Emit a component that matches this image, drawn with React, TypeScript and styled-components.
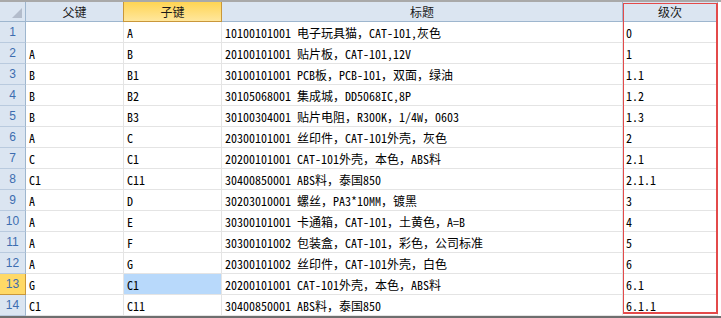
import React from "react";
import styled, { createGlobalStyle, css } from "styled-components";

const GlobalStyle = createGlobalStyle`
  html, body {
    margin: 0;
    padding: 0;
    background: #ffffff;
  }
  body {
    font-family: "Noto Sans CJK SC", "Liberation Sans", sans-serif;
  }
`;

const Sheet = styled.div`
  position: relative;
  width: 721px;
  height: 318px;
  overflow: hidden;
  background: #ffffff;
`;

const TopRule = styled.div`
  height: 2px;
  background: #a9a9a9;
`;

const BottomRule = styled.div`
  height: 2px;
  background: #6e6e6e;
`;

const Grid = styled.div`
  display: grid;
  grid-template-columns: 26px 98px 98px 401px 95px;
  grid-template-rows: 20px repeat(14, 21px);
  width: 718px;
`;

const HeaderCell = styled.div<{ $active?: boolean }>`
  position: relative;
  box-sizing: border-box;
  display: flex;
  align-items: center;
  justify-content: center;
  background: #dbe5f1;
  border-right: 1px solid #9eb6ce;
  border-bottom: 1px solid #9eb6ce;
  font-size: 12px;
  color: #1a1a1a;
  ${({ $active }) =>
    $active &&
    css`
      background: linear-gradient(#ffd453, #ffe79d);
      border-right-color: #c9973a;
      border-bottom-color: #c9973a;
      &::before {
        content: "";
        position: absolute;
        left: -1px;
        top: 0;
        bottom: -1px;
        width: 1px;
        background: #c9973a;
      }
    `}
`;

const Corner = styled(HeaderCell)`
  &::after {
    content: "";
    position: absolute;
    right: 3px;
    bottom: 3px;
    width: 0;
    height: 0;
    border-left: 10px solid transparent;
    border-bottom: 10px solid #b3bccb;
  }
`;

const RowNum = styled.div<{ $active?: boolean }>`
  box-sizing: border-box;
  display: flex;
  align-items: center;
  justify-content: center;
  background: #dbe5f1;
  border-right: 1px solid #9eb6ce;
  border-bottom: 1px solid #b9cade;
  font-family: "Liberation Sans", sans-serif;
  font-size: 12px;
  color: #3d6db0;
  ${({ $active }) =>
    $active &&
    css`
      background: #ffd966;
      border-right-color: #c9973a;
      border-bottom-color: #c9973a;
    `}
`;

const Cell = styled.div<{ $selected?: boolean }>`
  box-sizing: border-box;
  display: flex;
  align-items: center;
  padding: 0 3px;
  border-right: 1px solid #e4e4e4;
  border-bottom: 1px solid #e4e4e4;
  font-family: "Noto Sans Mono CJK SC", "Noto Sans CJK SC", monospace;
  font-size: 12px;
  color: #000000;
  white-space: pre;
  overflow: hidden;
  background: ${({ $selected }) => ($selected ? "#b8d9fb" : "#ffffff")};
`;

const Annotation = styled.div`
  position: absolute;
  left: 623px;
  top: 3px;
  width: 95px;
  height: 311px;
  box-sizing: border-box;
  border-style: solid;
  border-color: #e34a4a;
  border-width: 1px 2px 2px 1px;
  pointer-events: none;
`;

type Row = [string, string, string, string];

const rows: Row[] = [
  ["", "A", "10100101001 电子玩具猫，CAT-101,灰色", "0"],
  ["A", "B", "20100101001 贴片板，CAT-101,12V", "1"],
  ["B", "B1", "30100101001 PCB板，PCB-101，双面，绿油", "1.1"],
  ["B", "B2", "30105068001 集成城，DD5068IC,8P", "1.2"],
  ["B", "B3", "30100304001 贴片电阻，R300K，1/4W，0603", "1.3"],
  ["A", "C", "20300101001 丝印件，CAT-101外壳，灰色", "2"],
  ["C", "C1", "20200101001 CAT-101外壳，本色，ABS料", "2.1"],
  ["C1", "C11", "30400850001 ABS料，泰国850", "2.1.1"],
  ["A", "D", "30203010001 螺丝，PA3*10MM，镀黑", "3"],
  ["A", "E", "30300101001 卡通箱，CAT-101，土黄色，A=B", "4"],
  ["A", "F", "30300101002 包装盒，CAT-101，彩色，公司标准", "5"],
  ["A", "G", "20300101002 丝印件，CAT-101外壳，白色", "6"],
  ["G", "C1", "20200101001 CAT-101外壳，本色，ABS料", "6.1"],
  ["C1", "C11", "30400850001 ABS料，泰国850", "6.1.1"],
];

const activeRow = 12;

export default function App() {
  return (
    <>
      <GlobalStyle />
      <Sheet>
        <TopRule />
        <Grid>
          <Corner />
          <HeaderCell>父键</HeaderCell>
          <HeaderCell $active>子键</HeaderCell>
          <HeaderCell>标题</HeaderCell>
          <HeaderCell>级次</HeaderCell>
          {rows.map((r, i) => (
            <React.Fragment key={i}>
              <RowNum $active={i === activeRow}>{i + 1}</RowNum>
              <Cell>{r[0]}</Cell>
              <Cell $selected={i === activeRow}>{r[1]}</Cell>
              <Cell>{r[2]}</Cell>
              <Cell>{r[3]}</Cell>
            </React.Fragment>
          ))}
        </Grid>
        <BottomRule />
        <Annotation />
      </Sheet>
    </>
  );
}
